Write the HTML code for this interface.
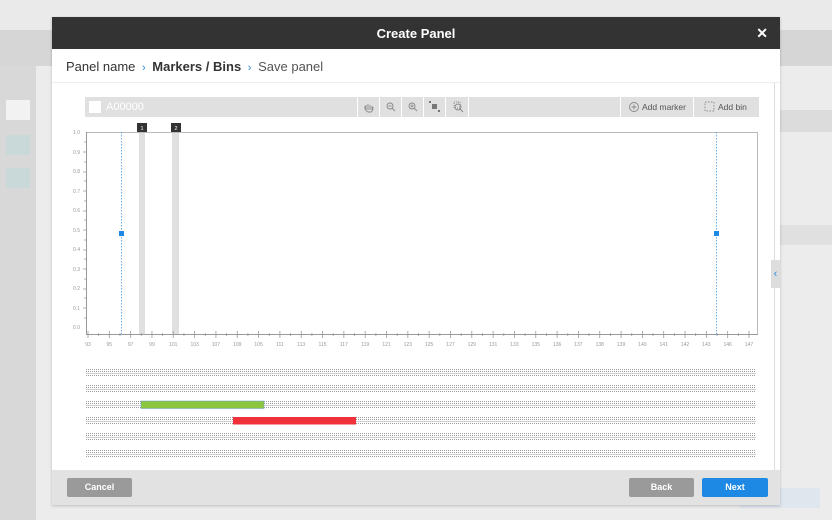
<!DOCTYPE html>
<html><head><meta charset="utf-8"><style>
*{margin:0;padding:0;box-sizing:border-box}
body{width:832px;height:520px;overflow:hidden;background:#ececec;font-family:"Liberation Sans",sans-serif;position:relative}
.a{position:absolute}
</style></head><body>
<div class="a" style="left:0;top:0;width:832px;height:30px;background:#eaeaea"></div>
<div class="a" style="left:0;top:30px;width:832px;height:36px;background:#d6d6d6"></div>
<div class="a" style="left:0;top:66px;width:36px;height:454px;background:#d8d8d8"></div>
<div class="a" style="left:6px;top:100px;width:24px;height:20px;background:#f2f2f2"></div>
<div class="a" style="left:6px;top:135px;width:24px;height:20px;background:#c9d9da"></div>
<div class="a" style="left:6px;top:168px;width:24px;height:20px;background:#c9d9da"></div>
<div class="a" style="left:780px;top:110px;width:52px;height:22px;background:#dcdcdc"></div>
<div class="a" style="left:780px;top:225px;width:52px;height:20px;background:#e0e0e0"></div>
<div class="a" style="left:740px;top:488px;width:80px;height:20px;background:#e0e6ee"></div>

<div class="a" style="left:52px;top:17px;width:728px;height:488px;background:#fff;box-shadow:0 1px 3px rgba(0,0,0,.2)">
  <div class="a" style="left:0;top:0;width:728px;height:32px;background:#333;color:#fff;font-weight:bold;font-size:13px;text-align:center;line-height:34px">Create Panel</div>
  <div class="a" style="right:12px;top:8px;color:#fff;font-size:14px;font-weight:bold">✕</div>
  <div class="a" style="left:14px;top:42px;font-size:13px;color:#333;white-space:nowrap">Panel name <span style="color:#2a8de0;font-size:11px;margin:0 3px">›</span> <b>Markers / Bins</b> <span style="color:#2a8de0;font-size:11px;margin:0 3px">›</span> <span style="color:#555">Save panel</span></div>
  <div class="a" style="left:0;top:65px;width:728px;height:1px;background:#eee"></div>
  <div class="a" style="left:722px;top:66px;width:1px;height:387px;background:#ddd"></div>
  <div class="a" style="left:0;top:453px;width:728px;height:35px;background:#e2e2e2"></div>
  <div class="a" style="left:15px;top:461px;width:65px;height:19px;background:#9a9a9a;color:#fff;font-size:9px;font-weight:bold;text-align:center;line-height:19px;border-radius:2px">Cancel</div>
  <div class="a" style="left:577px;top:461px;width:65px;height:19px;background:#9a9a9a;color:#fff;font-size:9px;font-weight:bold;text-align:center;line-height:19px;border-radius:2px">Back</div>
  <div class="a" style="left:650px;top:461px;width:66px;height:19px;background:#1e88e5;color:#fff;font-size:9px;font-weight:bold;text-align:center;line-height:19px;border-radius:2px">Next</div>
</div>
<div class="a" style="left:771px;top:260px;width:9px;height:28px;background:#ddd;color:#2a8de0;font-size:11px;line-height:28px;text-align:center">‹</div>

<div class="a" style="left:85px;top:97px;width:674px;height:20px;background:#e0e0e0"></div>
<div class="a" style="left:89px;top:101px;width:12px;height:12px;background:#fff"></div>
<div class="a" style="left:106px;top:99px;font-size:11px;color:#fff;line-height:16px">A00000</div>
<svg class="a" style="left:0;top:0" width="832" height="520">
 <g stroke="#fff" stroke-width="1">
  <line x1="357.5" y1="97" x2="357.5" y2="117"/><line x1="379.5" y1="97" x2="379.5" y2="117"/><line x1="401.5" y1="97" x2="401.5" y2="117"/><line x1="423.5" y1="97" x2="423.5" y2="117"/><line x1="445.5" y1="97" x2="445.5" y2="117"/><line x1="468.5" y1="97" x2="468.5" y2="117"/><line x1="620.5" y1="97" x2="620.5" y2="117"/><line x1="693.5" y1="97" x2="693.5" y2="117"/>
 </g>
 <g fill="none" stroke="#888" stroke-width="0.9">
  <path d="M366 110 v-5 M368 110 v-6 M370 110 v-5 M372 110 v-4 M365 106 q-1 4 3 6 h3 q2-1 2-5"/>
  <circle cx="390" cy="106" r="3"/><path d="M392 108 l3 3 M388.5 106 h3"/>
  <circle cx="412" cy="106" r="3"/><path d="M414 108 l3 3 M410.5 106 h3 M412 104.5 v3"/>
  <rect x="454" y="102" width="6" height="6" stroke-dasharray="1,1"/><circle cx="458" cy="107" r="3"/><path d="M460 109 l3 3"/>
  <circle cx="634" cy="107" r="4.5"/><path d="M631.5 107 h5 M634 104.5 v5"/>
  <rect x="705" y="102" width="9" height="9" stroke-dasharray="1.5,1.5"/>
 </g>
 <rect x="432" y="104" width="5" height="5" fill="#777"/><rect x="429" y="101" width="2" height="2" fill="#777"/><rect x="438" y="110" width="2" height="2" fill="#777"/>
 <text x="642" y="110" font-size="8.5" fill="#555" font-family="Liberation Sans">Add marker</text>
 <text x="718" y="110" font-size="8.5" fill="#555" font-family="Liberation Sans">Add bin</text>

 <rect x="139" y="132" width="6" height="203" fill="#e0e0e0"/>
 <rect x="172" y="132" width="7" height="203" fill="#e0e0e0"/>
 <rect x="137" y="123" width="10" height="9" fill="#333"/><text x="142" y="130" font-size="5.5" fill="#fff" text-anchor="middle" font-family="Liberation Sans">1</text>
 <rect x="171" y="123" width="10" height="9" fill="#333"/><text x="176" y="130" font-size="5.5" fill="#fff" text-anchor="middle" font-family="Liberation Sans">2</text>
 <rect x="86.5" y="132.5" width="671" height="202" fill="none" stroke="#bbb"/>
 <line x1="86.5" y1="132" x2="86.5" y2="335" stroke="#999"/>
 <line x1="86" y1="334.5" x2="758" y2="334.5" stroke="#999"/>
 <line x1="121.5" y1="132" x2="121.5" y2="335" stroke="#6aaee8" stroke-dasharray="1.5,1.5"/>
 <line x1="716.5" y1="132" x2="716.5" y2="335" stroke="#6aaee8" stroke-dasharray="1.5,1.5"/>
 <rect x="119" y="231" width="5" height="5" fill="#1e88e5"/>
 <rect x="714" y="231" width="5" height="5" fill="#1e88e5"/>
 <g font-size="5" fill="#999" font-family="Liberation Sans" text-anchor="end">
  <text x="80" y="134">1.0</text><text x="80" y="154">0.9</text><text x="80" y="173">0.8</text><text x="80" y="193">0.7</text><text x="80" y="212">0.6</text><text x="80" y="232">0.5</text><text x="80" y="251">0.4</text><text x="80" y="271">0.3</text><text x="80" y="290">0.2</text><text x="80" y="310">0.1</text><text x="80" y="329">0.0</text>
 </g>
 <g stroke="#999" stroke-width="0.8">
  <path d="M83 152h3M83 172h3M83 191h3M83 211h3M83 230h3M83 250h3M83 269h3M83 289h3M83 308h3M84 142h2M84 162h2M84 181h2M84 201h2M84 220h2M84 240h2M84 259h2M84 279h2M84 298h2M84 318h2"/>
 </g>
 <g id="xt" stroke="#999" stroke-width="0.8"></g>
 <g id="xl" font-size="5" fill="#999" font-family="Liberation Sans" text-anchor="middle"></g>
 <g id="rows" stroke="#999" stroke-width="0.9" stroke-dasharray="1,1"></g>
 <rect x="141" y="401" width="123" height="7.5" fill="#8cc63f" stroke="#6a9fd0" stroke-width="0.5"/>
 <rect x="233" y="417" width="123" height="7.5" fill="#f0303a"/>
</svg>
<script>
var ns="http://www.w3.org/2000/svg";
var xt=document.getElementById('xt'),xl=document.getElementById('xl'),rows=document.getElementById('rows');
var labs=[93,95,97,99,101,103,107,109,105,111,113,115,117,119,121,123,125,127,129,131,133,135,136,137,138,139,140,141,142,143,146,147];
var x0=88,x1=749,n=labs.length,st=(x1-x0)/(n-1);
for(var i=0;i<n;i++){var x=x0+i*st;
 var l=document.createElementNS(ns,'line');l.setAttribute('x1',x);l.setAttribute('x2',x);l.setAttribute('y1',331);l.setAttribute('y2',338);xt.appendChild(l);
 if(i<n-1){var m=document.createElementNS(ns,'line');m.setAttribute('x1',x+st/2);m.setAttribute('x2',x+st/2);m.setAttribute('y1',333);m.setAttribute('y2',336);xt.appendChild(m);}
 var t=document.createElementNS(ns,'text');t.setAttribute('x',x);t.setAttribute('y',346);t.textContent=labs[i];xl.appendChild(t);}
[369,385,401,417,433,450].forEach(function(y){for(var k=0;k<4;k++){var l=document.createElementNS(ns,'line');l.setAttribute('x1',86);l.setAttribute('x2',756);l.setAttribute('y1',y+k*2+.5);l.setAttribute('y2',y+k*2+.5);if(k==2){l.setAttribute('stroke','#ccc');l.setAttribute('stroke-dasharray','none');}rows.appendChild(l);}});
</script>
</body></html>
